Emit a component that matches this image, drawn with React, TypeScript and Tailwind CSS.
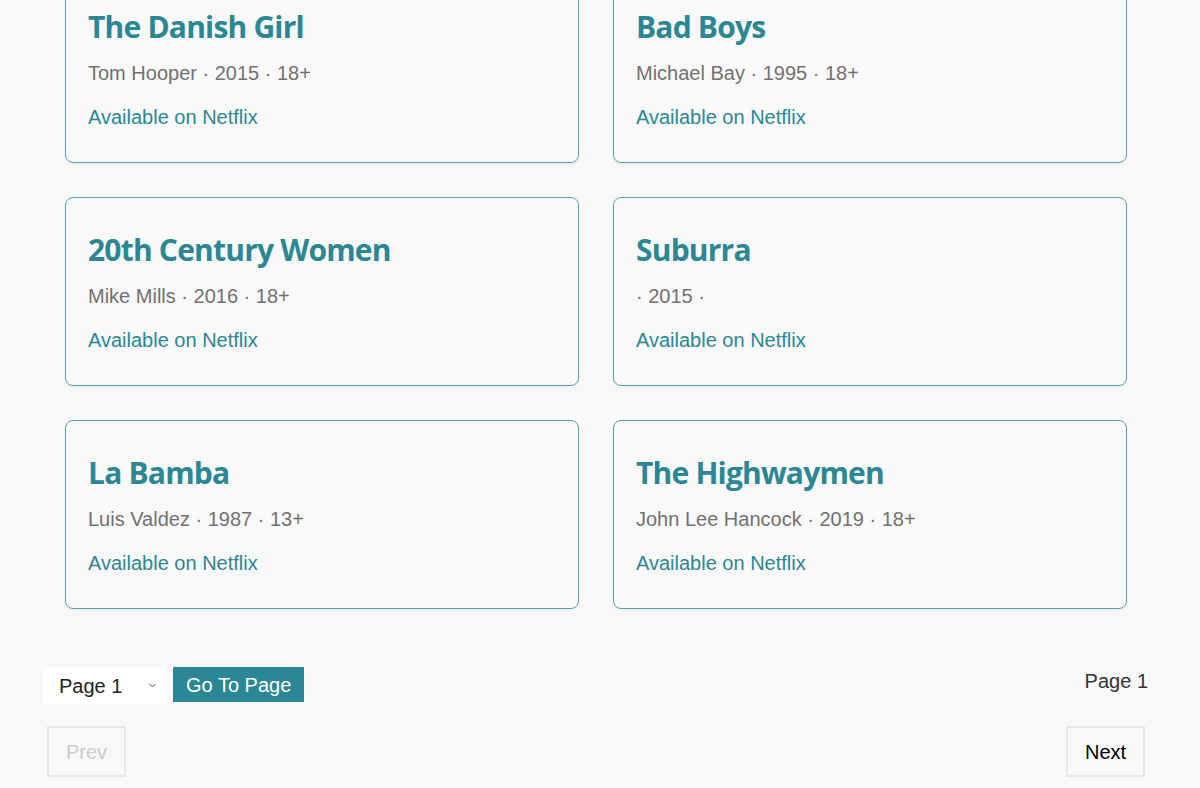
import { ChevronDown } from "lucide-react";

type Movie = {
  title: string;
  director: string;
  year: number;
  rating: string;
};

const movies: Movie[] = [
  { title: "The Danish Girl", director: "Tom Hooper", year: 2015, rating: "18+" },
  { title: "Bad Boys", director: "Michael Bay", year: 1995, rating: "18+" },
  { title: "20th Century Women", director: "Mike Mills", year: 2016, rating: "18+" },
  { title: "Suburra", director: "", year: 2015, rating: "" },
  { title: "La Bamba", director: "Luis Valdez", year: 1987, rating: "13+" },
  { title: "The Highwaymen", director: "John Lee Hancock", year: 2019, rating: "18+" },
];

function MovieCard({ movie }: { movie: Movie }) {
  const meta = [movie.director, String(movie.year), movie.rating].join(" · ").trim();
  return (
    <article className="h-[189px] rounded-lg border border-[#5aa3ae] bg-[#f9f9f9] px-[22px] pt-[34px] shadow-[0_1px_3px_rgba(0,0,0,0.06)]">
      <h3 className="font-['Open_Sans',sans-serif] text-[30px] leading-[36px] font-bold tracking-[-0.8px] text-[#2b8793]">
        {movie.title}
      </h3>
      <p className="mt-[16px] font-['Liberation_Sans',Arial,sans-serif] text-[20px] leading-[24px] text-[#737070]">{meta}</p>
      <p className="mt-[20px] font-['Liberation_Sans',Arial,sans-serif] text-[20px] leading-[24px] text-[#2b8793]">
        Available on Netflix
      </p>
    </article>
  );
}

export default function App() {
  return (
    <div className="min-h-screen overflow-hidden bg-[#f8f8f8] font-['Liberation_Sans',Arial,sans-serif]">
      <section className="mt-[-26px] grid grid-cols-[514px_514px] gap-x-[34px] gap-y-[34px] pl-[65px]">
        {movies.map((m) => (
          <MovieCard key={m.title} movie={m} />
        ))}
      </section>

      <div className="mt-[58px] flex items-start justify-between pr-[52px] pl-[43px]">
        <div className="flex items-start gap-[7px]">
          <div className="relative">
            <select className="h-[37px] w-[123px] appearance-none rounded-[4px] bg-white pl-[16px] text-[20px] text-[#222] outline-none">
              <option>Page 1</option>
            </select>
            <ChevronDown className="pointer-events-none absolute top-[13px] right-[8px] h-[11px] w-[11px] text-[#333]" strokeWidth={2} />
          </div>
          <button className="h-[35px] bg-[#2b8793] px-[13px] text-[20px] text-white">Go To Page</button>
        </div>
        <span className="mt-[2px] text-[20px] leading-[24px] text-[#333]">Page 1</span>
      </div>

      <div className="mt-[22px] flex justify-between pr-[55px] pl-[47px]">
        <button disabled className="h-[51px] w-[79px] border-2 border-[#e8e8e8] text-[20px] text-[#cccccc]">
          Prev
        </button>
        <button className="h-[51px] w-[79px] border-2 border-[#e8e8e8] text-[20px] text-black">Next</button>
      </div>
    </div>
  );
}
